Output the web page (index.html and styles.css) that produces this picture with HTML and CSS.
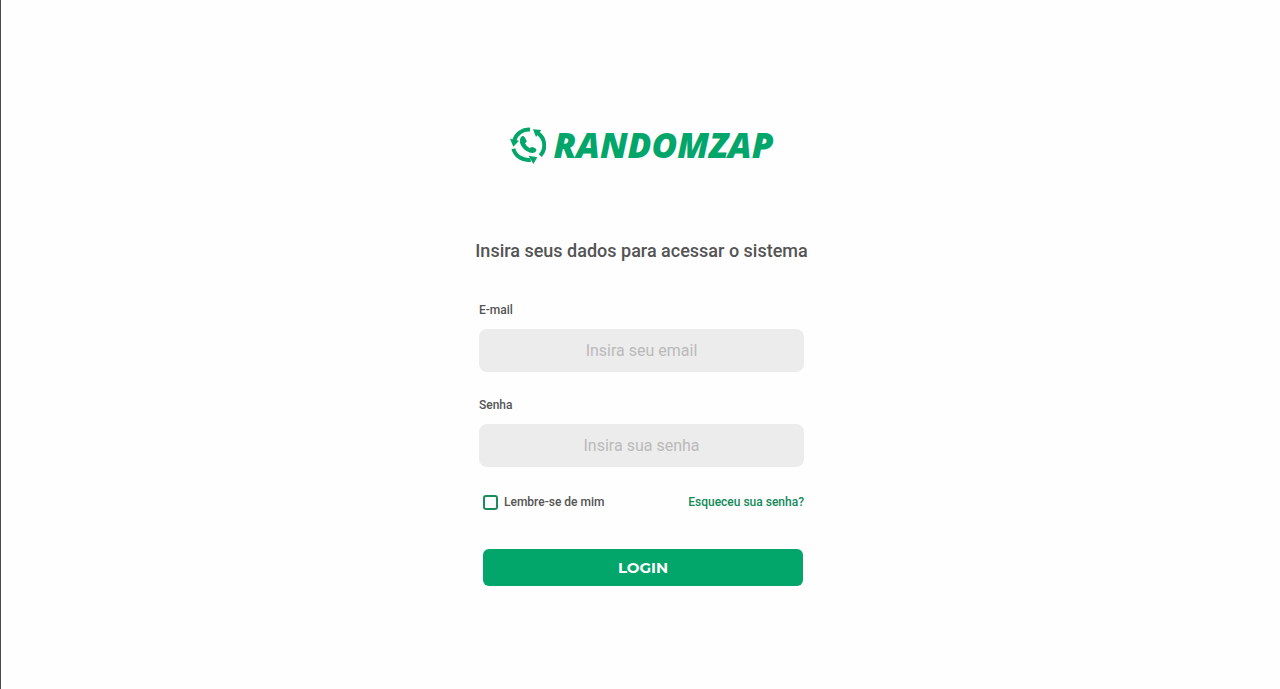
FILE: index.html
```html
<!DOCTYPE html>
<html lang="pt-BR">
<head>
<meta charset="utf-8">
<meta name="viewport" content="width=device-width, initial-scale=1">
<title>RandomZap - Login</title>
<link rel="stylesheet" href="styles.css">
</head>
<body>
<main class="login">
  <div class="brand">
    <svg class="brand-icon" viewBox="18 21 108 111" aria-hidden="true">
      <g fill="none" stroke="currentColor" stroke-width="12">
        <path d="M78 29A45 45 0 0 0 31 61"/>
        <path d="M28 86A46 46 0 0 0 80 119"/>
        <path d="M109 107A46 46 0 0 0 103 40"/>
      </g>
      <g fill="currentColor">
        <path d="M18 56L45 62L28 80Z"/>
        <path d="M74 107L100 112L88 132Z"/>
        <path d="M87 28L112 30L96 51Z"/>
        <path d="M51 51Q57 45 62 52L68 62Q69 66 63 70Q68 80 77 85Q82 80 86 81L96 86Q100 90 94 96Q84 103 69 94Q53 84 48 68Q46 57 51 51Z"/>
      </g>
    </svg>
    <span class="brand-name">RANDOMZAP</span>
  </div>
  <h1 class="title">Insira seus dados para acessar o sistema</h1>
  <form class="form">
    <label class="label" for="email">E-mail</label>
    <input class="field" id="email" type="email" placeholder="Insira seu email">
    <label class="label" for="senha">Senha</label>
    <input class="field" id="senha" type="password" placeholder="Insira sua senha">
    <div class="options">
      <label class="remember" for="lembrar"><input class="check" id="lembrar" type="checkbox">Lembre-se de mim</label>
      <a class="forgot" href="#">Esqueceu sua senha?</a>
    </div>
    <button class="submit" type="submit">LOGIN</button>
  </form>
</main>
</body>
</html>
```
FILE: styles.css
```css
* { box-sizing: border-box; }

body {
  margin: 0;
  min-height: 100vh;
  border-left: 1px solid #4a4a4a;
  background: #fefefe;
  color: #545454;
  font-family: Bahnschrift, Roboto, "Liberation Sans", sans-serif;
}

.login {
  display: flex;
  flex-direction: column;
  align-items: center;
  padding: 123px 0 48px 2px;
}

.brand {
  display: flex;
  align-items: center;
  gap: 8px;
  color: #03a66a;
}

.brand-icon { width: 36px; height: 37px; }

.brand-name {
  font: italic 800 35px/44px "Open Sans", Lato, sans-serif;
}

.title {
  margin: 72px 0 0;
  font-size: 18px;
  font-weight: 500;
  line-height: 24px;
  white-space: nowrap;
}

.form {
  display: flex;
  flex-direction: column;
  width: 100%;
  max-width: 325px;
}

.label {
  margin: 25px 0 11px;
  font-size: 12px;
  font-weight: 500;
  line-height: 16px;
}

.title + .form .label:first-child { margin-top: 39px; }

.field {
  height: 43px;
  padding: 0 16px;
  border: 0;
  border-radius: 8px;
  background: #ececec;
  color: #4d4d4d;
  font: inherit;
  font-size: 16px;
  text-align: center;
}

.field::placeholder { color: #bababa; opacity: 1; }

.options {
  display: flex;
  justify-content: space-between;
  align-items: center;
  margin-top: 27px;
  padding-left: 4px;
  font-size: 12px;
  font-weight: 500;
  line-height: 16px;
}

.remember { display: flex; align-items: center; gap: 6px; }

.check {
  appearance: none;
  width: 15px;
  height: 15px;
  margin: 0;
  border: 2px solid #1c8a5c;
  border-radius: 3px;
}

.check:checked { background: #1c8a5c; }

.forgot { color: #118a57; text-decoration: none; }

.submit {
  height: 37px;
  margin: 39px 1px 0 4px;
  border: 0;
  border-radius: 6px;
  background: #03a66a;
  color: #fff;
  font: 700 15px/20px Montserrat, Inter, sans-serif;
}
```
